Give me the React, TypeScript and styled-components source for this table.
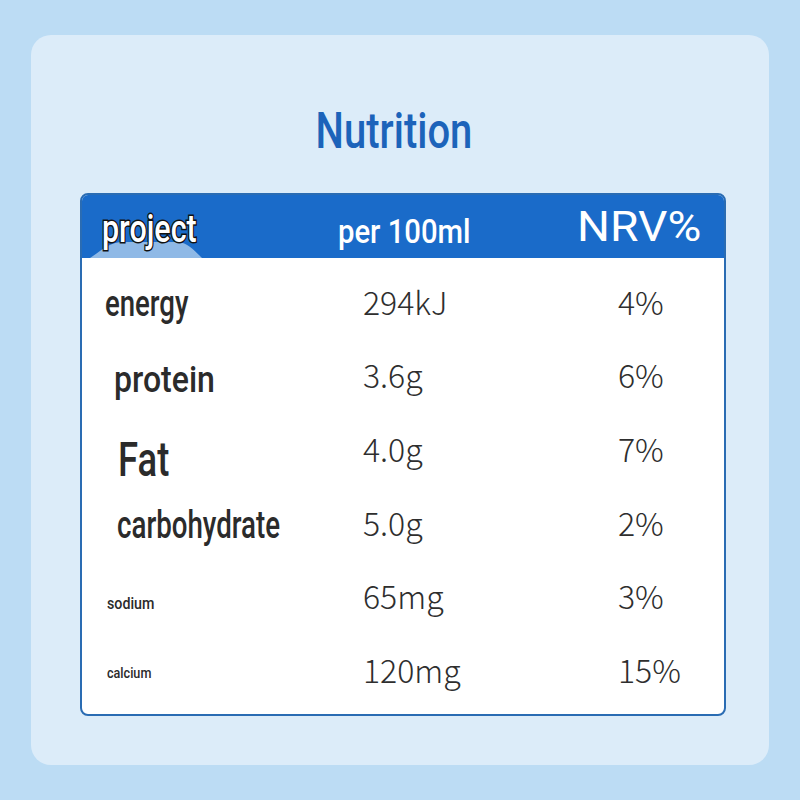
import React from "react";
import styled, { createGlobalStyle } from "styled-components";

const GlobalStyle = createGlobalStyle`
  html, body { margin: 0; padding: 0; }
  body { background: #bcdcf4; font-family: Roboto, "Noto Sans", sans-serif; }
  * { box-sizing: border-box; }
`;

const Page = styled.div`
  width: 800px;
  height: 800px;
  padding: 35px 31px;
  background: #bcdcf4;
`;

const Card = styled.div`
  width: 738px;
  height: 730px;
  background: #dcecf9;
  border-radius: 20px;
  padding-top: 71px;
  display: flex;
  flex-direction: column;
`;

const TitleRow = styled.div`
  display: flex;
  justify-content: center;
  padding-right: 12px;
  margin-bottom: 37px;
`;

const Title = styled.h1`
  margin: 0;
  display: inline-block;
  font-family: Roboto, sans-serif;
  font-weight: 500;
  font-size: 50px;
  line-height: 50px;
  color: #1c63ba;
  transform: scaleX(0.8);
`;

const Table = styled.div`
  margin-left: 49px;
  width: 646px;
  height: 523px;
  border: 2px solid #2a6cb3;
  border-radius: 8px;
  overflow: hidden;
  background: #ffffff;
  display: flex;
  flex-direction: column;
`;

const Header = styled.div`
  position: relative;
  height: 63px;
  background: #1a6bc9;
  display: grid;
  grid-template-columns: 256px 239px 1fr;
  align-items: center;
`;

const Hill = styled.svg`
  position: absolute;
  left: 0;
  bottom: 0;
  width: 130px;
  height: 20px;
`;

const HeadCell = styled.div<{ $pad?: number; $left?: number }>`
  position: relative;
  padding-top: ${(p) => p.$pad ?? 0}px;
  padding-left: ${(p) => p.$left ?? 0}px;
  white-space: nowrap;
`;

const ProjectText = styled.span`
  display: inline-block;
  font-family: Roboto, sans-serif;
  font-weight: 500;
  font-size: 39px;
  line-height: 39px;
  color: #ffffff;
  -webkit-text-stroke: 3px #111111;
  paint-order: stroke fill;
  transform: scaleX(0.78);
  transform-origin: left center;
`;

const PerText = styled.span`
  display: inline-block;
  font-family: Roboto, sans-serif;
  font-weight: 500;
  font-size: 34px;
  line-height: 34px;
  color: #ffffff;
  transform: scaleX(0.86);
  transform-origin: left center;
`;

const NrvText = styled.span`
  display: inline-block;
  font-family: Roboto, sans-serif;
  font-weight: 400;
  font-size: 42px;
  line-height: 42px;
  color: #ffffff;
  transform: scaleX(1.1);
  transform-origin: left center;
`;

const Body = styled.div`
  padding-top: 6px;
  display: flex;
  flex-direction: column;
`;

const Row = styled.div`
  height: 73.6px;
  display: grid;
  grid-template-columns: 281px 255px 1fr;
`;

const LabelCell = styled.div<{ $pad: number; $left: number }>`
  display: flex;
  align-items: center;
  padding-top: ${(p) => p.$pad}px;
  padding-left: ${(p) => p.$left}px;
  white-space: nowrap;
`;

const Label = styled.span<{ $size: number; $scale: number }>`
  display: inline-block;
  font-family: Roboto, sans-serif;
  font-weight: 500;
  font-size: ${(p) => p.$size}px;
  line-height: 1;
  color: #2b2b2b;
  transform: scaleX(${(p) => p.$scale});
  transform-origin: left center;
`;

const ValueCell = styled.div`
  display: flex;
  align-items: center;
  font-family: "Noto Sans CJK SC", "Noto Sans", sans-serif;
  font-weight: 300;
  font-size: 32px;
  line-height: 1;
  color: #2e2e2e;
  white-space: nowrap;
`;

type Item = {
  label: string;
  size: number;
  scale: number;
  pad: number;
  left: number;
  value: string;
  nrv: string;
};

const items: Item[] = [
  { label: "energy", size: 37, scale: 0.745, pad: 6, left: 23, value: "294kJ", nrv: "4%" },
  { label: "protein", size: 36, scale: 0.89, pad: 12, left: 32, value: "3.6g", nrv: "6%" },
  { label: "Fat", size: 48, scale: 0.76, pad: 25, left: 36, value: "4.0g", nrv: "7%" },
  { label: "carbohydrate", size: 39, scale: 0.71, pad: 7, left: 35, value: "5.0g", nrv: "2%" },
  { label: "sodium", size: 16, scale: 0.89, pad: 17, left: 25, value: "65mg", nrv: "3%" },
  { label: "calcium", size: 15, scale: 0.84, pad: 10, left: 25, value: "120mg", nrv: "15%" },
];

export default function App() {
  return (
    <>
      <GlobalStyle />
      <Page>
        <Card>
          <TitleRow>
            <Title>Nutrition</Title>
          </TitleRow>
          <Table>
            <Header>
              <Hill viewBox="0 0 130 20" preserveAspectRatio="none">
                <path d="M8 20 C 20 12, 26 5, 40 4 L 96 4 C 106 5, 112 12, 120 20 Z" fill="#8fb9e6" />
              </Hill>
              <HeadCell $pad={5} $left={20}>
                <ProjectText>project</ProjectText>
              </HeadCell>
              <HeadCell $pad={9}>
                <PerText>per 100ml</PerText>
              </HeadCell>
              <HeadCell $pad={0}>
                <NrvText>NRV%</NrvText>
              </HeadCell>
            </Header>
            <Body>
              {items.map((it) => (
                <Row key={it.label}>
                  <LabelCell $pad={it.pad} $left={it.left}>
                    <Label $size={it.size} $scale={it.scale}>
                      {it.label}
                    </Label>
                  </LabelCell>
                  <ValueCell>{it.value}</ValueCell>
                  <ValueCell>{it.nrv}</ValueCell>
                </Row>
              ))}
            </Body>
          </Table>
        </Card>
      </Page>
    </>
  );
}
